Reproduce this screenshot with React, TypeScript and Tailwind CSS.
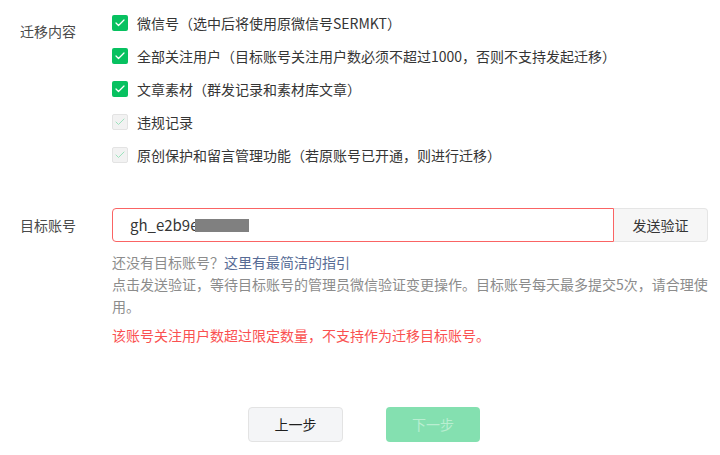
import { Check } from 'lucide-react';

const items = [
  { label: '微信号（选中后将使用原微信号SERMKT）', disabled: false },
  { label: '全部关注用户（目标账号关注用户数必须不超过1000，否则不支持发起迁移）', disabled: false },
  { label: '文章素材（群发记录和素材库文章）', disabled: false },
  { label: '违规记录', disabled: true },
  { label: '原创保护和留言管理功能（若原账号已开通，则进行迁移）', disabled: true },
];

function Checkbox({ disabled }: { disabled: boolean }) {
  return disabled ? (
    <span className="flex h-4 w-4 shrink-0 items-center justify-center rounded-[2px] border border-[#e3e3e3] bg-[#f2f2f2]">
      <Check className="h-3 w-3 text-[#9be3bd]" strokeWidth={2} />
    </span>
  ) : (
    <span className="flex h-4 w-4 shrink-0 items-center justify-center rounded-[2px] bg-[#07c160]">
      <Check className="h-3 w-3 text-white" strokeWidth={2.5} />
    </span>
  );
}

export default function App() {
  return (
    <div
      className="h-[455px] w-[720px] bg-white text-[14px] text-[#353535]"
      style={{ fontFamily: '"Noto Sans CJK SC", "Liberation Sans", sans-serif' }}
    >
      {/* 迁移内容 */}
      <div className="flex pt-[6px]">
        <div className="w-[112px] shrink-0 pl-5 pt-[14px] leading-[22px] text-[#4a4a4a]">迁移内容</div>
        <div className="flex flex-col">
          {items.map((item) => (
            <div key={item.label} className="flex h-[33px] items-center gap-[9px] leading-[22px]">
              <Checkbox disabled={item.disabled} />
              <span>{item.label}</span>
            </div>
          ))}
        </div>
      </div>

      {/* 目标账号 */}
      <div className="mt-[37px] flex">
        <div className="w-[112px] shrink-0 pl-5 pt-[6px] leading-[22px] text-[#4a4a4a]">目标账号</div>
        <div className="w-[596px]">
          <div className="flex h-[34px]">
            <div className="flex flex-1 items-center rounded-l-[4px] border border-[#fa6464] pl-[17px] text-[15px] text-[#353535]">
              <span>gh_e2b9e</span>
              <span className="-ml-[4px] h-[13px] w-[54px] bg-[#808080]" />
            </div>
            <button className="w-[94px] rounded-r-[4px] border border-l-0 border-[#e5e5e5] bg-[#f6f6f6] text-[14px] text-[#353535]">
              发送验证
            </button>
          </div>
          <div className="mt-[9px] leading-[22px] text-[#8c8c8c]">
            <p>
              还没有目标账号？<span className="text-[#576b95]">这里有最简洁的指引</span>
            </p>
            <p>点击发送验证，等待目标账号的管理员微信验证变更操作。目标账号每天最多提交5次，请合理使用。</p>
          </div>
          <p className="mt-[7px] leading-[22px] text-[#fa5151]">该账号关注用户数超过限定数量，不支持作为迁移目标账号。</p>
        </div>
      </div>

      {/* 操作 */}
      <div className="mt-[61px] flex justify-center gap-[43px] pl-2">
        <button className="h-[35px] w-[95px] rounded-[4px] border border-[#e3e3e3] bg-[#f4f5f7] text-[14px] text-[#1f1f1f]">
          上一步
        </button>
        <button className="h-[35px] w-[94px] rounded-[4px] bg-[#84e0b0] text-[14px] text-[#b9eed1]">下一步</button>
      </div>
    </div>
  );
}
